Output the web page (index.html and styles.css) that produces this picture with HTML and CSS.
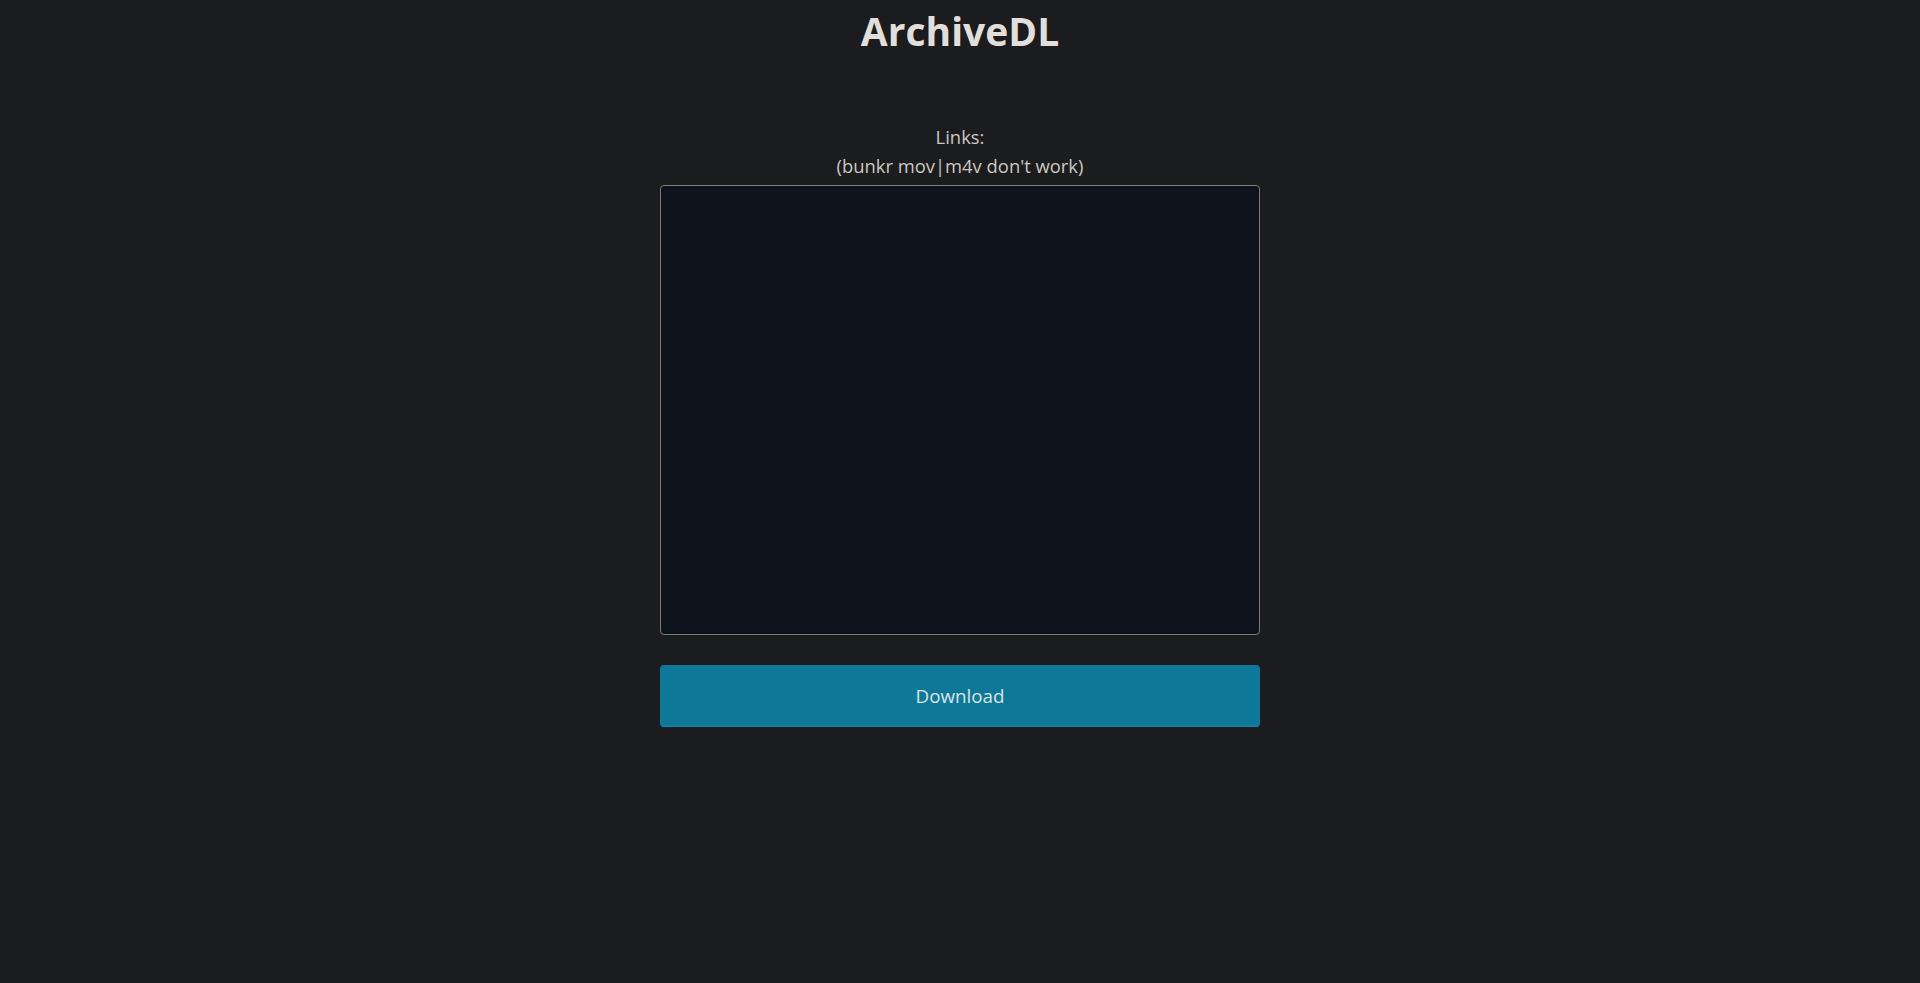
FILE: index.html
```html
<!DOCTYPE html>
<html lang="en">
<head>
<meta charset="utf-8">
<title>ArchiveDL</title>
<link rel="stylesheet" href="styles.css">
</head>
<body>
<main class="page">
  <h1 class="title">ArchiveDL</h1>
  <form class="form">
    <label class="label" for="links">Links:<br>(bunkr mov|m4v don't work)</label>
    <textarea class="links" id="links"></textarea>
    <button class="btn" type="button">Download</button>
  </form>
</main>
</body>
</html>
```
FILE: styles.css
```css
html, body {
  margin: 0;
  padding: 0;
  background: #1b1c1e;
  color: #d6d2cb;
  font-family: "Open Sans", "Noto Sans", sans-serif;
}
.page {
  display: flex;
  flex-direction: column;
  align-items: center;
}
.title {
  margin: 0;
  font-size: 39px;
  line-height: 62px;
  font-weight: 700;
  color: #e2dfda;
}
.form {
  width: 600px;
  display: flex;
  flex-direction: column;
  align-items: stretch;
  margin-top: 60px;
}
.label {
  text-align: center;
  font-size: 18.4px;
  line-height: 29px;
  color: #ccc8c1;
  margin-bottom: 5px;
}
.links {
  box-sizing: border-box;
  width: 600px;
  height: 450px;
  margin: 0;
  background: #0e121a;
  border: 1px solid #7f7a72;
  border-radius: 4px;
  resize: none;
  color: #d6d2cb;
}
.btn {
  margin-top: 30px;
  height: 62px;
  border: none;
  border-bottom: 1px solid #1189b0;
  border-radius: 4px;
  background: #0e7898;
  color: #dde3e6;
  font-family: "Open Sans", "Noto Sans", sans-serif;
  font-size: 18.8px;
}
```
